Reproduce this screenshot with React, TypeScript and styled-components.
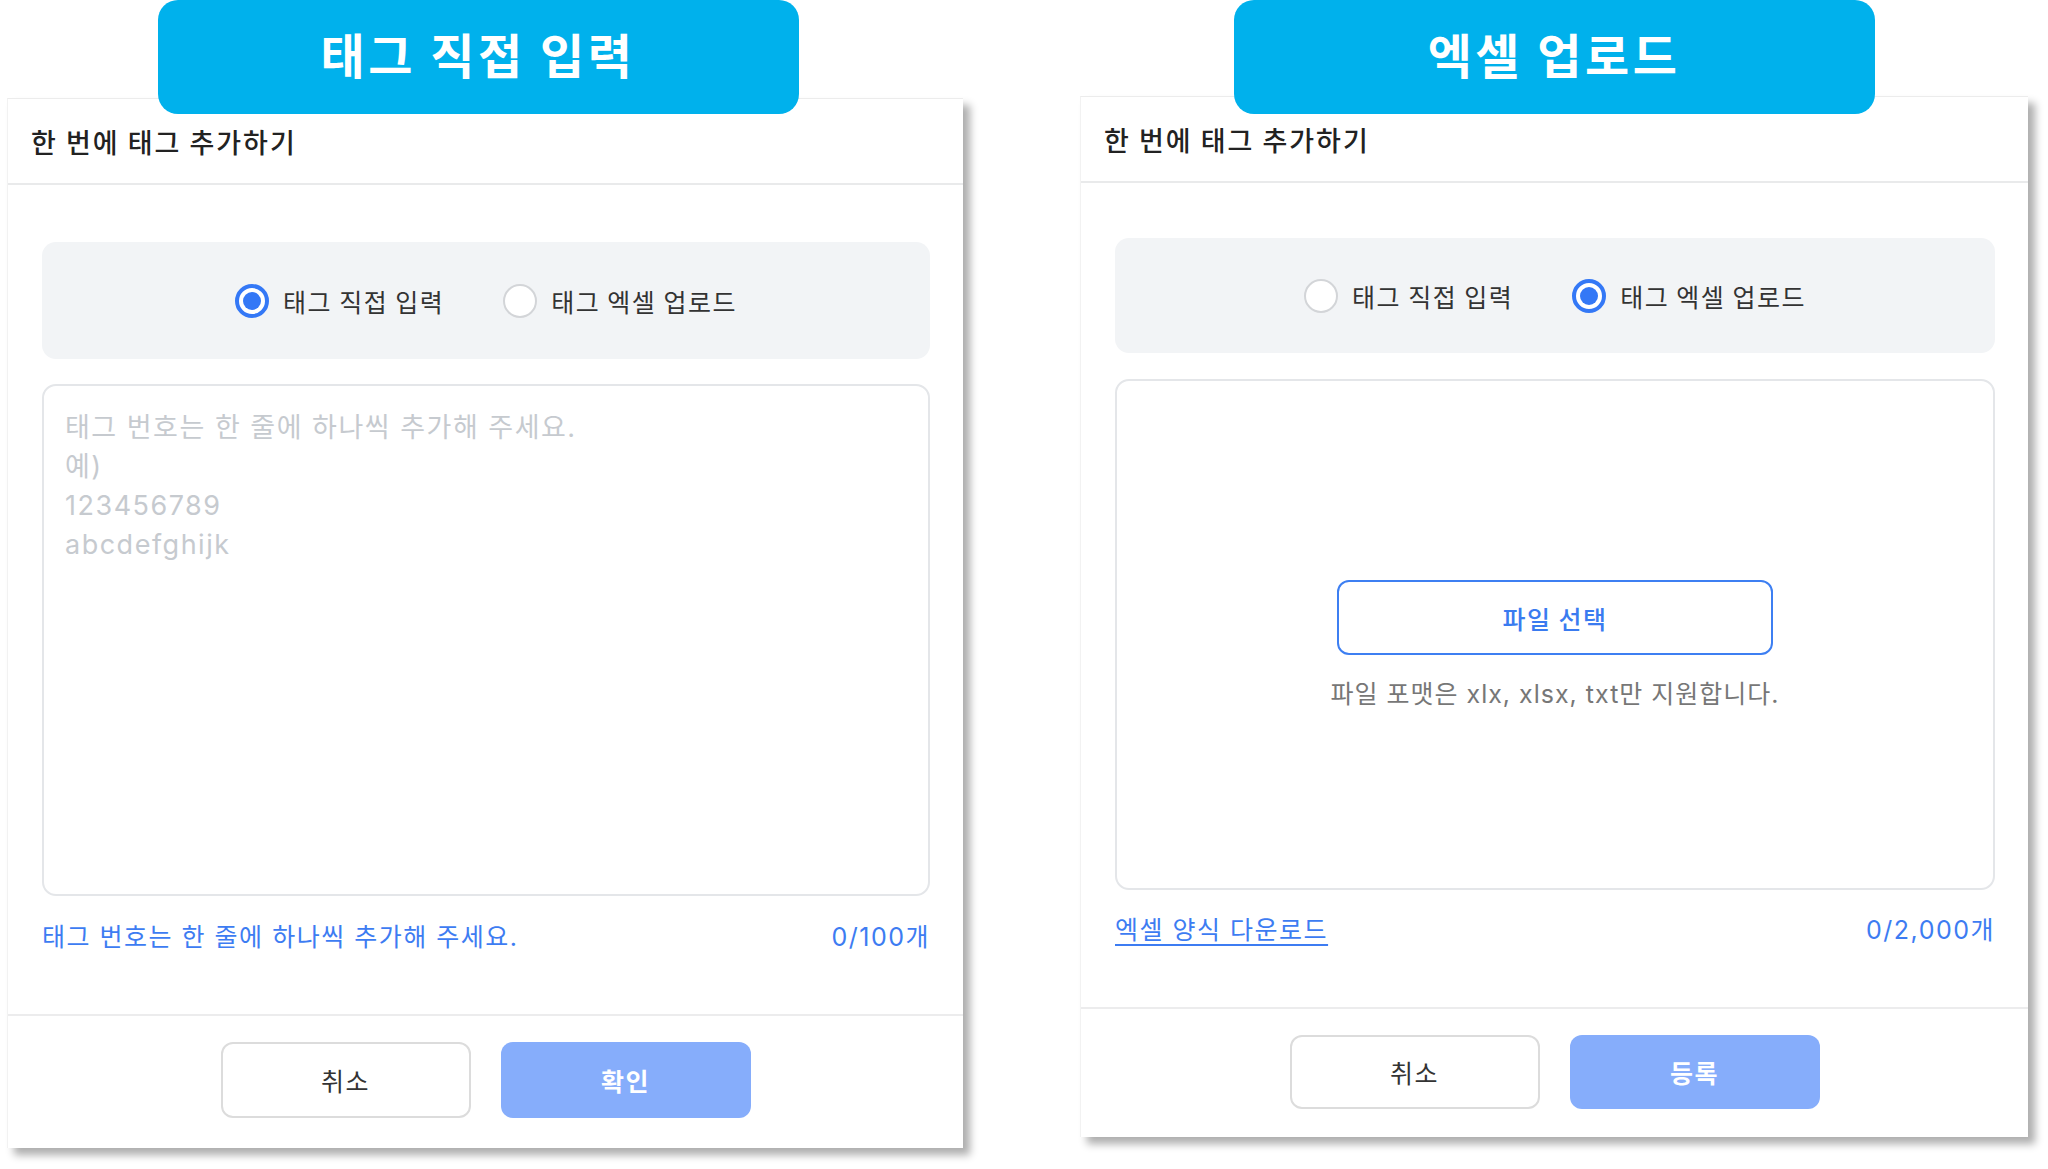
import styled, { createGlobalStyle } from 'styled-components'

const GlobalStyle = createGlobalStyle`
  html, body {
    margin: 0;
    padding: 0;
    background: #ffffff;
  }
  body {
    font-family: Inter, 'Noto Sans CJK KR', 'Noto Sans', sans-serif;
    color: #333333;
    letter-spacing: 1.5px;
  }
  * {
    box-sizing: border-box;
  }
  button, textarea {
    letter-spacing: inherit;
  }
`

type Mode = 'direct' | 'excel'

function Radio({ on, label }: { on: boolean; label: string }) {
  return (
    <RadioItem>
      <RadioCircle $on={on} />
      <span>{label}</span>
    </RadioItem>
  )
}

function TagDialog({ mode }: { mode: Mode }) {
  const excel = mode === 'excel'
  return (
    <Dialog $w={excel ? 948 : 956}>
      <Header>한 번에 태그 추가하기</Header>
      <Body $top={excel ? 55 : 57}>
        <RadioBox $h={excel ? 115 : 117}>
          <Radio on={!excel} label='태그 직접 입력' />
          <Radio on={excel} label='태그 엑셀 업로드' />
        </RadioBox>
        {excel ? (
          <UploadBox>
            <FileButton>파일 선택</FileButton>
            <FormatNote>파일 포맷은 xlx, xlsx, txt만 지원합니다.</FormatNote>
          </UploadBox>
        ) : (
          <TagInput
            placeholder={'태그 번호는 한 줄에 하나씩 추가해 주세요.\n예)\n123456789\nabcdefghijk'}
          />
        )}
        <InfoRow $top={excel ? 23 : 24}>
          {excel ? <DownloadLink>엑셀 양식 다운로드</DownloadLink> : <span>태그 번호는 한 줄에 하나씩 추가해 주세요.</span>}
          <span>{excel ? '0/2,000개' : '0/100개'}</span>
        </InfoRow>
      </Body>
      <Actions $bottom={excel ? 28 : 30}>
        <ActionButton $h={excel ? 74 : 76}>취소</ActionButton>
        <ActionButton $primary $h={excel ? 74 : 76}>{excel ? '등록' : '확인'}</ActionButton>
      </Actions>
    </Dialog>
  )
}

export default function App() {
  return (
    <Page>
      <GlobalStyle />
      <Column>
        <Badge $overlap={16} $shift={-14}>태그 직접 입력</Badge>
        <TagDialog mode='direct' />
      </Column>
      <Column>
        <Badge $overlap={18} $shift={0}>엑셀 업로드</Badge>
        <TagDialog mode='excel' />
      </Column>
    </Page>
  )
}

const Page = styled.main`
  width: 2048px;
  height: 1169px;
  overflow: hidden;
  display: flex;
  flex-direction: row;
  align-items: flex-start;
  gap: 117px;
  padding-left: 7px;
  background: #ffffff;
`

const Column = styled.section`
  display: flex;
  flex-direction: column;
  align-items: center;
`

const Badge = styled.div<{ $overlap: number; $shift: number }>`
  position: relative;
  z-index: 2;
  width: 641px;
  height: 114px;
  padding-bottom: 9px;
  margin-bottom: -${p => p.$overlap}px;
  margin-right: ${p => -p.$shift}px;
  display: flex;
  align-items: center;
  justify-content: center;
  border-radius: 20px;
  background: #00b1ec;
  color: #ffffff;
  font-family: 'Noto Sans CJK KR', sans-serif;
  font-size: 48px;
  font-weight: 700;
  letter-spacing: 3.5px;
`

const Dialog = styled.div<{ $w: number }>`
  width: ${p => p.$w}px;
  background: #ffffff;
  border-top: 1px solid #ececec;
  border-left: 1px solid #f2f2f2;
  box-shadow: 7px 7px 8px rgba(0, 0, 0, 0.32);
  display: flex;
  flex-direction: column;
`

const Header = styled.header`
  height: 86px;
  padding: 0 23px;
  display: flex;
  align-items: center;
  border-bottom: 2px solid #e9eaeb;
  font-family: 'Noto Sans CJK KR', sans-serif;
  font-size: 27px;
  font-weight: 500;
  letter-spacing: 2px;
  color: #222222;
`

const Body = styled.div<{ $top: number }>`
  padding: ${p => p.$top}px 33px 64px 34px;
  display: flex;
  flex-direction: column;
`

const RadioBox = styled.div<{ $h: number }>`
  height: ${p => p.$h}px;
  border-radius: 14px;
  background: #f2f4f6;
  display: flex;
  align-items: center;
  justify-content: center;
  gap: 59px;
`

const RadioItem = styled.label`
  display: flex;
  align-items: center;
  gap: 14px;
  font-family: 'Noto Sans CJK KR', sans-serif;
  font-size: 25px;
  color: #333333;
`

const RadioCircle = styled.span<{ $on: boolean }>`
  position: relative;
  width: 34px;
  height: 34px;
  border-radius: 50%;
  background: #ffffff;
  border: ${p => (p.$on ? '4px solid #3478f6' : '2px solid #d3d5d8')};

  &::after {
    content: '';
    display: ${p => (p.$on ? 'block' : 'none')};
    position: absolute;
    top: 4px;
    left: 4px;
    width: 18px;
    height: 18px;
    border-radius: 50%;
    background: #3478f6;
  }
`

const TagInput = styled.textarea`
  width: 100%;
  height: 512px;
  margin: 25px 0 0;
  padding: 22px 21px;
  border: 2px solid #e4e6e9;
  border-radius: 14px;
  resize: none;
  outline: none;
  font-family: Inter, 'Noto Sans CJK KR', sans-serif;
  font-size: 27px;
  line-height: 39px;
  color: #333333;

  &::placeholder {
    color: #c6cacf;
  }
`

const UploadBox = styled.div`
  height: 511px;
  margin-top: 26px;
  padding-top: 22px;
  border: 2px solid #e4e6e9;
  border-radius: 14px;
  display: flex;
  flex-direction: column;
  align-items: center;
  justify-content: center;
`

const FileButton = styled.button`
  width: 436px;
  height: 75px;
  border: 2px solid #3d7ff2;
  border-radius: 12px;
  background: #ffffff;
  color: #3a7bf0;
  font-family: 'Noto Sans CJK KR', sans-serif;
  font-size: 25px;
  font-weight: 500;
`

const FormatNote = styled.p`
  margin: 22px 0 0;
  font-family: Inter, 'Noto Sans CJK KR', sans-serif;
  font-size: 25px;
  line-height: 34px;
  letter-spacing: 1px;
  color: #777777;
`

const InfoRow = styled.div<{ $top: number }>`
  margin-top: ${p => p.$top}px;
  height: 30px;
  display: flex;
  align-items: center;
  justify-content: space-between;
  font-family: Inter, 'Noto Sans CJK KR', sans-serif;
  font-size: 25px;
  color: #3d7cf2;
`

const DownloadLink = styled.a`
  color: #3d7cf2;
  text-decoration: underline;
  text-underline-offset: 5px;
  text-decoration-thickness: 2px;
`

const Actions = styled.footer<{ $bottom: number }>`
  border-top: 2px solid #ececed;
  padding: 26px 0 ${p => p.$bottom}px;
  display: flex;
  justify-content: center;
  gap: 30px;
`

const ActionButton = styled.button<{ $primary?: boolean; $h: number }>`
  width: 250px;
  height: ${p => p.$h}px;
  border-radius: 12px;
  border: ${p => (p.$primary ? 'none' : '2px solid #dcdcdc')};
  background: ${p => (p.$primary ? '#86adfb' : '#ffffff')};
  color: ${p => (p.$primary ? '#ffffff' : '#333333')};
  font-family: 'Noto Sans CJK KR', sans-serif;
  font-size: 25px;
  font-weight: ${p => (p.$primary ? 700 : 400)};
`
